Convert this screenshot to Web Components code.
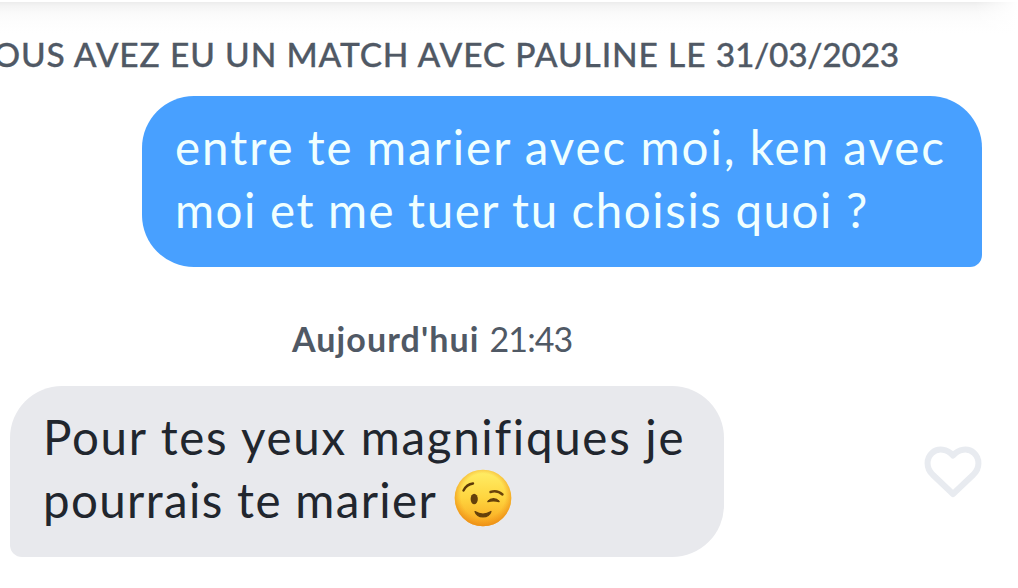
<!DOCTYPE html>
<html lang="fr">
<head>
<meta charset="utf-8">
<title>Conversation</title>
<style>
  body {
    margin: 0;
    background: #fff;
    font-family: Lato, "Open Sans", sans-serif;
  }
</style>
</head>
<body>
<chat-thread>
  <match-notice>VOUS AVEZ EU UN MATCH AVEC PAULINE LE <span style="letter-spacing: -0.27px">31/03/2023</span></match-notice>
  <chat-message side="sent">
    <chat-line style="letter-spacing: 1.95px; word-spacing: -0.8px">entre te marier avec moi, ken avec</chat-line>
    <chat-line style="letter-spacing: 1.55px; word-spacing: -0.8px">moi et me tuer tu choisis quoi ?</chat-line>
  </chat-message>
  <time-stamp><b slot="day">Aujourd'hui</b>21:43</time-stamp>
  <chat-message side="received">
    <chat-line style="letter-spacing: 1.7px">Pour tes yeux magnifiques je</chat-line>
    <chat-line style="letter-spacing: 1.35px">pourrais te marier <wink-emoji></wink-emoji></chat-line>
    <like-button slot="action"></like-button>
  </chat-message>
</chat-thread>

<script>
function define(name, html) {
  const template = document.createElement("template");
  template.innerHTML = html;
  customElements.define(name, class extends HTMLElement {
    constructor() {
      super();
      this.attachShadow({ mode: "open" });
      this.shadowRoot.appendChild(template.content.cloneNode(true));
    }
  });
}

define("chat-thread", `
<style>
  :host {
    display: flex;
    flex-direction: column;
    box-sizing: border-box;
    height: 588px;
    overflow: hidden;
  }
  .edge {
    flex: none;
    height: 31px;
    margin-top: 2px;
    background:
      linear-gradient(to right, transparent 975px, #fff 1018px),
      linear-gradient(#ececec, #f4f4f4 4px, #fafafa 11px, #fdfdfd 20px, #fff);
  }
</style>
<div class="edge"></div>
<slot></slot>`);

define("match-notice", `
<style>
  :host {
    display: flex;
    justify-content: flex-end;
    flex: none;
    height: 63px;
    padding-right: 119px;
    font-size: 33.5px;
    font-weight: 500;
    line-height: 42px;
    letter-spacing: 0.87px;
    white-space: nowrap;
    color: #505965;
    -webkit-text-stroke: 0.3px #505965;
  }
</style>
<span><slot></slot></span>`);

define("chat-message", `
<style>
  :host {
    display: flex;
    align-items: center;
    flex: none;
    height: 171px;
    padding: 0 36px 0 10px;
  }
  .bubble {
    box-sizing: border-box;
    height: 171px;
    padding: 19px 33px 0 33px;
    font-size: 47.5px;
    line-height: 63px;
    white-space: nowrap;
  }
  :host([side="sent"]) {
    justify-content: flex-end;
  }
  :host([side="sent"]) .bubble {
    width: 840px;
    border-radius: 52px 52px 12px 52px;
    background: #48a0ff;
    color: #f0ffff;
  }
  :host([side="received"]) {
    justify-content: space-between;
  }
  :host([side="received"]) .bubble {
    width: 714px;
    border-radius: 52px 52px 52px 12px;
    background: #e8e9ed;
    color: #21262e;
  }
</style>
<div class="bubble"><slot></slot></div>
<slot name="action"></slot>`);

define("chat-line", `
<style>
  :host {
    display: block;
    height: 63px;
  }
</style>
<slot></slot>`);

define("time-stamp", `
<style>
  :host {
    display: flex;
    flex: none;
    gap: 10px;
    height: 82px;
    margin-top: 37px;
    padding-left: 292px;
    font-size: 34px;
    line-height: 70px;
    color: #505965;
  }
  ::slotted(b) { letter-spacing: 1.1px; }
  span { letter-spacing: -0.9px; }
</style>
<slot name="day"></slot>
<span><slot></slot></span>`);

define("wink-emoji", `
<style>
  :host {
    display: inline-block;
    width: 58px;
    height: 58px;
    margin-left: 4px;
    vertical-align: -9px;
  }
  svg { display: block; }
</style>
<svg width="58" height="58" viewBox="0 0 58 58" fill="none" role="img" aria-label="😉">
  <defs>
    <linearGradient id="skin" x1="0" y1="0" x2="0" y2="1">
      <stop offset="0" stop-color="#ffef68"/>
      <stop offset="0.5" stop-color="#ffd53f"/>
      <stop offset="1" stop-color="#f9a51e"/>
    </linearGradient>
    <radialGradient id="rim" cx="0.5" cy="0.46" r="0.54">
      <stop offset="0.72" stop-color="#f2961b" stop-opacity="0"/>
      <stop offset="1" stop-color="#e98a15" stop-opacity="0.8"/>
    </radialGradient>
  </defs>
  <circle cx="29" cy="29" r="28.3" fill="url(#skin)"/>
  <circle cx="29" cy="29" r="28.3" fill="url(#rim)"/>
  <path d="M9.500 21.500c2-4 5.200-6.500 9.500-7" stroke="#5d3908" stroke-width="2.400" stroke-linecap="round"/>
  <path d="M36.500 23c4.500-1.500 8.500-.7 12 2.500" stroke="#6b430a" stroke-width="2.400" stroke-linecap="round"/>
  <ellipse cx="20.200" cy="30" rx="3.600" ry="5.200" fill="#65400b"/>
  <path d="M34 32.500c3-3.600 8-3.600 11 0-3.500-1-7.500-1-11 0z" fill="#65400b" stroke="#65400b" stroke-width="1.600" stroke-linejoin="round"/>
  <path d="M21 42.500c5 3.200 11 3.200 16 0-2.200 7.200-13.800 7.200-16 0z" fill="#65400b" stroke="#65400b" stroke-width="1.200" stroke-linejoin="round"/>
</svg>`);

define("like-button", `
<style>
  :host { display: block; }
  svg { display: block; }
</style>
<svg width="58" height="54" viewBox="0 0 58 54" fill="none" role="img" aria-label="J'aime">
  <path d="M29 49 8.500 29.500C2 23 2 13.500 8 8 14 2.500 23.500 4 29 10.500 34.500 4 44 2.500 50 8c6 5.500 6 15-.5 21.500z" stroke="#e8ebf0" stroke-width="6" stroke-linejoin="round"/>
</svg>`);
</script>
</body>
</html>
